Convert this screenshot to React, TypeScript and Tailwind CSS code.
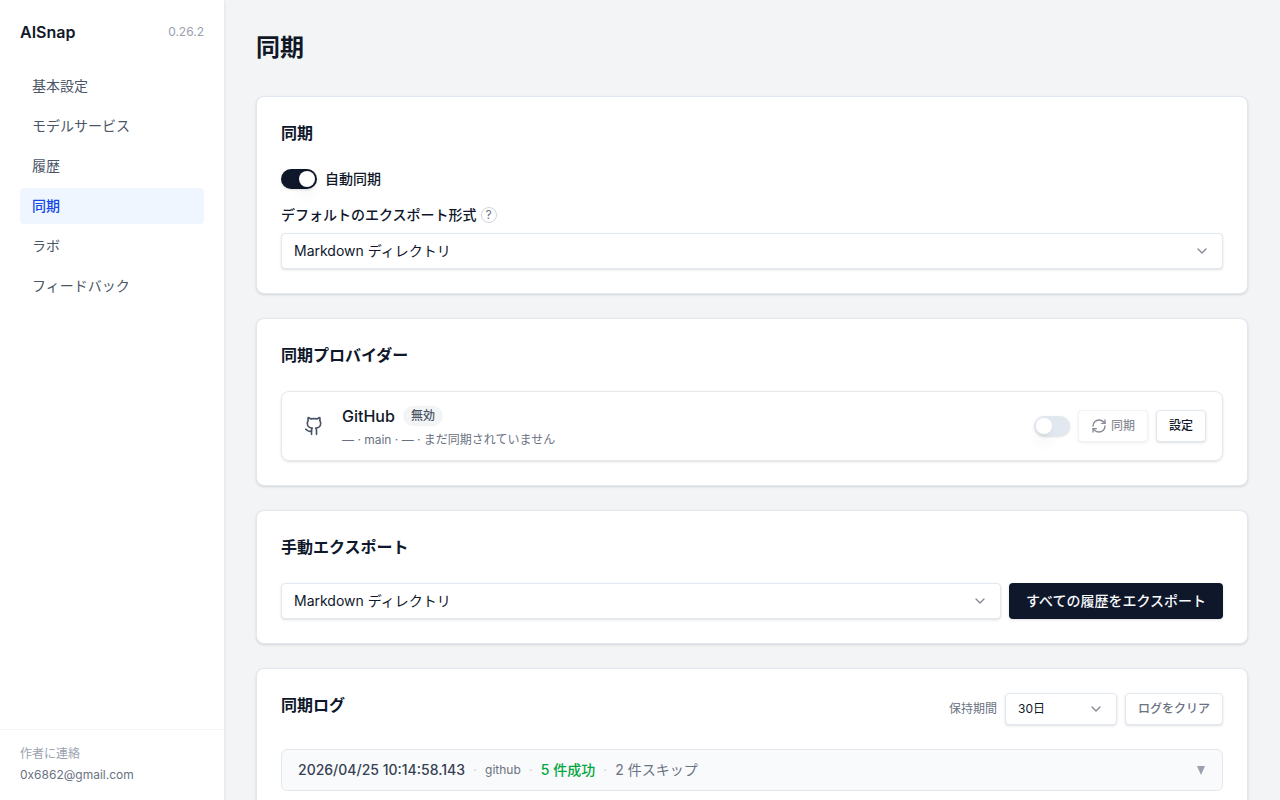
import { useState, type ReactNode } from "react"

import { clsx } from "clsx"
import { ChevronDown, Github, RefreshCw } from "lucide-react"

const NAV_ITEMS = [
  { id: "basic", label: "基本設定" },
  { id: "models", label: "モデルサービス" },
  { id: "history", label: "履歴" },
  { id: "sync", label: "同期" },
  { id: "lab", label: "ラボ" },
  { id: "feedback", label: "フィードバック" }
]

const EXPORT_FORMATS = [
  { value: "markdown-dir", label: "Markdown ディレクトリ" },
  { value: "json", label: "JSON" }
]

const RETENTION = [
  { value: "7", label: "7日" },
  { value: "30", label: "30日" },
  { value: "90", label: "90日" }
]

const LOGS = [{ time: "2026/04/25 10:14:58.143", provider: "github", success: 5, skipped: 2 }]

function Card({ title, action, children }: { title: string; action?: ReactNode; children: ReactNode }) {
  return (
    <section className="rounded-lg border border-slate-200 bg-white p-6 shadow-sm">
      <div className="mb-6 flex items-start justify-between">
        <h2 className="text-base font-semibold text-slate-900">{title}</h2>
        {action}
      </div>
      {children}
    </section>
  )
}

interface SwitchProps {
  id: string
  label?: string
  checked: boolean
  onChange: (checked: boolean) => void
}

function Switch({ id, label, checked, onChange }: SwitchProps) {
  return (
    <input
      id={id}
      type="checkbox"
      role="switch"
      aria-label={label}
      checked={checked}
      onChange={(e) => onChange(e.target.checked)}
      className="h-5 w-9 shrink-0 cursor-pointer appearance-none rounded-full border-2 border-transparent bg-slate-200 shadow-sm transition-colors before:block before:size-4 before:rounded-full before:bg-white before:shadow-lg before:transition-transform checked:bg-slate-900 checked:before:translate-x-4"
    />
  )
}

interface SelectProps {
  id: string
  label?: string
  value: string
  options: { value: string; label: string }[]
  onChange: (value: string) => void
  small?: boolean
}

function Select({ id, label, value, options, onChange, small }: SelectProps) {
  return (
    <div className={clsx("relative", small ? "w-28" : "w-full")}>
      <select
        id={id}
        aria-label={label}
        value={value}
        onChange={(e) => onChange(e.target.value)}
        className={clsx(
          "block w-full appearance-none rounded border border-slate-200 bg-white pr-9 pl-3 text-slate-900 shadow-sm",
          small ? "h-8 text-xs" : "h-9 text-sm"
        )}
      >
        {options.map((o) => (
          <option key={o.value} value={o.value}>
            {o.label}
          </option>
        ))}
      </select>
      <ChevronDown
        className={clsx("pointer-events-none absolute right-[13px] size-4 text-slate-900 opacity-50", small ? "top-2" : "top-2.5")}
      />
    </div>
  )
}

function Sidebar() {
  const [active, setActive] = useState("sync")

  return (
    <aside className="z-10 flex w-56 shrink-0 flex-col bg-white shadow-sm">
      <div className="flex items-center justify-between p-5 pb-6">
        <span className="text-base font-semibold text-gray-900">AISnap</span>
        <span className="text-xs text-gray-400">0.26.2</span>
      </div>
      <nav className="flex flex-1 flex-col gap-1 px-5">
        {NAV_ITEMS.map((item) => (
          <button
            key={item.id}
            onClick={() => setActive(item.id)}
            className={clsx(
              "h-9 rounded px-3 text-left text-sm",
              active === item.id ? "bg-blue-50 font-medium text-blue-700" : "text-gray-600 hover:bg-gray-50"
            )}
          >
            {item.label}
          </button>
        ))}
      </nav>
      <div className="border-t border-gray-100 px-5 py-4">
        <p className="mb-1 text-xs text-gray-400">作者に連絡</p>
        <a href="mailto:0x6862@gmail.com" className="block text-xs leading-[18px] text-gray-500">
          0x6862@gmail.com
        </a>
      </div>
    </aside>
  )
}

function App() {
  const [autoSync, setAutoSync] = useState(true)
  const [githubEnabled, setGithubEnabled] = useState(false)
  const [defaultFormat, setDefaultFormat] = useState("markdown-dir")
  const [manualFormat, setManualFormat] = useState("markdown-dir")
  const [retention, setRetention] = useState("30")

  return (
    <div className="flex h-screen bg-gray-100 font-['Inter','Noto_Sans_CJK_JP',sans-serif]" lang="ja">
      <Sidebar />
      <main className="min-w-0 flex-1 overflow-y-auto p-8">
        <h1 className="mb-8 text-2xl font-semibold text-gray-900">同期</h1>

        <div className="flex flex-col gap-6">
          <Card title="同期">
            <div className="flex items-center gap-2">
              <Switch id="auto-sync" checked={autoSync} onChange={setAutoSync} />
              <label htmlFor="auto-sync" className="text-sm font-medium text-slate-900">
                自動同期
              </label>
            </div>
            <div className="mt-4 mb-2 flex items-center gap-1">
              <label htmlFor="default-format" className="text-sm font-medium text-slate-900">
                デフォルトのエクスポート形式
              </label>
              <button
                aria-label="ヘルプ"
                className="flex size-4 items-center justify-center rounded-full border border-gray-300 text-xs text-gray-500"
              >
                ?
              </button>
            </div>
            <Select id="default-format" value={defaultFormat} options={EXPORT_FORMATS} onChange={setDefaultFormat} />
          </Card>

          <Card title="同期プロバイダー">
            <div className="flex items-center gap-3 rounded-lg border border-gray-200 px-4 py-3 shadow-sm">
              <div className="flex size-8 items-center justify-center text-gray-600">
                <Github className="size-5" />
              </div>
              <div className="min-w-0 flex-1">
                <div className="flex items-center gap-2">
                  <h3 className="text-base font-medium text-gray-900">GitHub</h3>
                  <span className="rounded-full bg-gray-100 px-2 py-0.5 text-xs font-medium text-gray-600">無効</span>
                </div>
                <p className="mt-1 text-xs text-gray-500">— · main · — · まだ同期されていません</p>
              </div>
              <div className="flex items-center gap-2">
                <Switch id="github-enabled" label="GitHub" checked={githubEnabled} onChange={setGithubEnabled} />
                <button
                  disabled={!githubEnabled}
                  className="flex h-8 items-center gap-1 rounded border border-slate-200 bg-white px-3 text-xs font-medium text-slate-900 shadow-sm disabled:opacity-50"
                >
                  <RefreshCw className="size-4" />
                  同期
                </button>
                <button className="h-8 rounded border border-slate-200 bg-white px-3 text-xs font-medium text-slate-900 shadow-sm">
                  設定
                </button>
              </div>
            </div>
          </Card>

          <Card title="手動エクスポート">
            <div className="flex items-center gap-2">
              <Select
                id="manual-format"
                label="エクスポート形式"
                value={manualFormat}
                options={EXPORT_FORMATS}
                onChange={setManualFormat}
              />
              <button className="h-9 shrink-0 rounded bg-slate-900 px-[17px] text-sm font-medium text-slate-50 shadow-sm">
                すべての履歴をエクスポート
              </button>
            </div>
          </Card>

          <Card
            title="同期ログ"
            action={
              <div className="flex items-center gap-2">
                <label htmlFor="retention" className="text-xs text-gray-500">
                  保持期間
                </label>
                <Select id="retention" value={retention} options={RETENTION} onChange={setRetention} small />
                <button className="h-8 rounded border border-slate-200 bg-white px-3 text-xs font-medium text-gray-500 shadow-sm">
                  ログをクリア
                </button>
              </div>
            }
          >
            {LOGS.map((log) => (
              <button
                key={log.time}
                className="flex w-full items-center justify-between rounded-md border border-gray-200 bg-gray-50 px-4 py-2.5 text-sm"
              >
                <span className="flex items-center gap-2">
                  <span className="font-medium text-gray-700">{log.time}</span>
                  <span className="text-gray-300">·</span>
                  <span className="text-xs text-gray-500">{log.provider}</span>
                  <span className="text-gray-300">·</span>
                  <span className="font-medium text-green-600">{log.success} 件成功</span>
                  <span className="text-gray-300">·</span>
                  <span className="text-gray-500">{log.skipped} 件スキップ</span>
                </span>
                <svg viewBox="0 0 8 9" className="mr-px h-[9px] w-2 fill-gray-400" aria-hidden="true">
                  <path d="M0 0h8L4 9z" />
                </svg>
              </button>
            ))}
          </Card>
        </div>
      </main>
    </div>
  )
}

export default App
